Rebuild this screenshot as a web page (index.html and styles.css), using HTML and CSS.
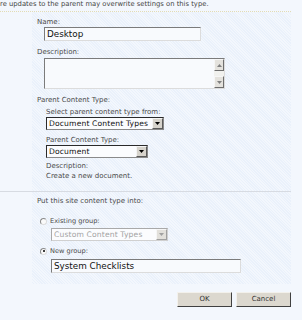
FILE: index.html
```html
<!DOCTYPE html>
<html>
<head>
<meta charset="utf-8">
<link rel="stylesheet" href="styles.css">
</head>
<body>
<div class="note">re updates to the parent may overwrite settings on this type.</div>
<div class="page">
  <div class="section first">
    <div class="gutter"></div>
    <div class="panel">
      <div class="label">Name:</div>
      <div class="field input name"><span>Desktop</span></div>
      <div class="label">Description:</div>
      <div class="textarea">
        <div class="ta-body"></div>
        <div class="scroll">
          <div class="sbtn"><svg width="5" height="3" viewBox="0 0 5 3"><path d="M0 3h5L2.5 0z" fill="#808080"/></svg></div>
          <div class="strack"></div>
          <div class="sbtn"><svg width="5" height="3" viewBox="0 0 5 3"><path d="M0 0h5L2.5 3z" fill="#808080"/></svg></div>
        </div>
      </div>
      <div class="label">Parent Content Type:</div>
      <div class="sub">
        <div class="label">Select parent content type from:</div>
        <div class="select s1"><span>Document Content Types</span><div class="arrow"><svg width="5" height="3" viewBox="0 0 5 3"><path d="M0 0h5L2.5 3z" fill="#000"/></svg></div></div>
        <div class="label">Parent Content Type:</div>
        <div class="select s2"><span>Document</span><div class="arrow"><svg width="5" height="3" viewBox="0 0 5 3"><path d="M0 0h5L2.5 3z" fill="#000"/></svg></div></div>
        <div class="label">Description:</div>
        <div class="label">Create a new document.</div>
      </div>
    </div>
  </div>
  <div class="section second">
    <div class="gutter"></div>
    <div class="panel">
      <div class="label">Put this site content type into:</div>
      <div class="radio-row r1"><span class="radio"></span><span class="rlabel">Existing group:</span></div>
      <div class="select s3 disabled"><span>Custom Content Types</span><div class="arrow"><svg width="5" height="3" viewBox="0 0 5 3"><path d="M0 0h5L2.5 3z" fill="#a0a0a0"/></svg></div></div>
      <div class="radio-row r2"><span class="radio on"></span><span class="rlabel">New group:</span></div>
      <div class="field input group"><span>System Checklists</span></div>
    </div>
  </div>
  <div class="buttons">
    <div class="btn">OK</div>
    <div class="btn">Cancel</div>
  </div>
</div>
</body>
</html>
```

FILE: styles.css
```css
html, body {
  margin: 0;
  padding: 0;
}
body {
  background: #f3f7fd;
  font-family: "DejaVu Sans", Verdana, sans-serif;
  font-size: 7px;
  color: #4a4a4a;
  width: 302px;
  height: 320px;
  overflow: hidden;
}
.note {
  height: 12px;
  line-height: 10px;
  margin-top: -1px;
  font-size: 6.8px;
  white-space: nowrap;
  color: #444;
}
.page {
  width: 291px;
}
.section {
  display: grid;
  grid-template-columns: 32px 1fr;
}
.section.first {
  border-top: 1px dotted #e3dcb4;
  height: 179px;
}
.section.second {
  border-top: 1px solid #d7dbe2;
  height: 92px;
}
.panel {
  background-color: #eaf1fb;
  background-image: repeating-linear-gradient(45deg, rgba(255,255,255,0.45) 0 1px, transparent 1px 2px);
  padding-left: 5px;
}
.first .panel { padding-top: 5px; }
.second .panel { padding-top: 4px; }
.label {
  height: 10px;
  line-height: 10px;
  white-space: nowrap;
}
.field {
  box-sizing: border-box;
  border-style: solid;
  border-width: 1px;
  border-color: #7b7b7b #dcdcdc #dcdcdc #7b7b7b;
  background: #f8fafd;
  font-size: 8.8px;
  color: #111;
  line-height: 12px;
  padding-left: 2px;
  white-space: nowrap;
}
.name {
  width: 157px;
  height: 14px;
  margin: 0 0 6px 7px;
}
.textarea {
  display: flex;
  box-sizing: border-box;
  width: 181px;
  height: 31px;
  margin: 1px 0 6px 7px;
  border-style: solid;
  border-width: 1px;
  border-color: #7b7b7b #dcdcdc #dcdcdc #7b7b7b;
  background: #f8fafd;
}
.ta-body { flex: 1; }
.scroll {
  width: 10px;
  display: flex;
  flex-direction: column;
  background: #eeeeee;
}
.sbtn {
  height: 12px;
  box-sizing: border-box;
  background: #e4e2dd;
  border-style: solid;
  border-width: 1px;
  border-color: #f6f6f6 #6e6e6e #6e6e6e #f6f6f6;
  display: flex;
  align-items: center;
  justify-content: center;
}
.strack { flex: 1; background: #f1f1ee; }
.sub {
  padding-left: 9px;
  margin-top: 2px;
}
.select {
  box-sizing: border-box;
  display: flex;
  align-items: center;
  height: 13px;
  border: 1px solid #2a2a2a;
  border-right-color: #8a8a8a;
  border-bottom-color: #8a8a8a;
  background: #fbfcfe;
  font-size: 7.6px;
  letter-spacing: 0.15px;
  color: #111;
  padding-left: 2px;
  white-space: nowrap;
}
.select span { flex: 1; overflow: hidden; line-height: 11px; }
.arrow {
  width: 11px;
  height: 11px;
  box-sizing: border-box;
  background: #d6d3cc;
  border-style: solid;
  border-width: 1px;
  border-color: #f4f4f4 #5a5a5a #5a5a5a #f4f4f4;
  display: flex;
  align-items: center;
  justify-content: center;
  flex: none;
}
.s1 { width: 118px; margin: 0 0 5px 0; }
.s2 { width: 102px; margin: 0 0 3px 0; }
.s3 {
  width: 117px;
  margin: 1px 0 4px 14px;
}
.select.disabled {
  color: #a3a3a3;
  border-color: #a9a9a9 #d0d0d0 #d0d0d0 #a9a9a9;
}
.disabled .arrow {
  background: #e2e0db;
  border-color: #f6f6f6 #a0a0a0 #a0a0a0 #f6f6f6;
}
.radio-row {
  display: flex;
  align-items: center;
  height: 12px;
  padding-left: 3px;
  white-space: nowrap;
}
.r1 { margin-top: 9px; }
.rlabel { margin-left: 3px; font-size: 6.6px; }
.radio {
  width: 7px;
  height: 7px;
  box-sizing: border-box;
  border-radius: 50%;
  border: 1px solid #8a8a8a;
  border-bottom-color: #dddddd;
  border-right-color: #dddddd;
  background: #fafafa;
  position: relative;
}
.radio.on::after {
  content: "";
  position: absolute;
  left: 1.5px;
  top: 1.5px;
  width: 2px;
  height: 2px;
  border-radius: 50%;
  background: #000;
}
.group {
  width: 190px;
  height: 14px;
  margin: 2px 0 0 14px;
}
.buttons {
  display: flex;
  justify-content: flex-end;
  gap: 4px;
  margin-top: 8px;
}
.btn {
  width: 55px;
  height: 15px;
  box-sizing: border-box;
  background: #dcd8cf;
  border-style: solid;
  border-width: 1px;
  border-color: #f3f1ec #404040 #404040 #f3f1ec;
  font-size: 7px;
  color: #333;
  text-align: center;
  line-height: 13px;
}
```
